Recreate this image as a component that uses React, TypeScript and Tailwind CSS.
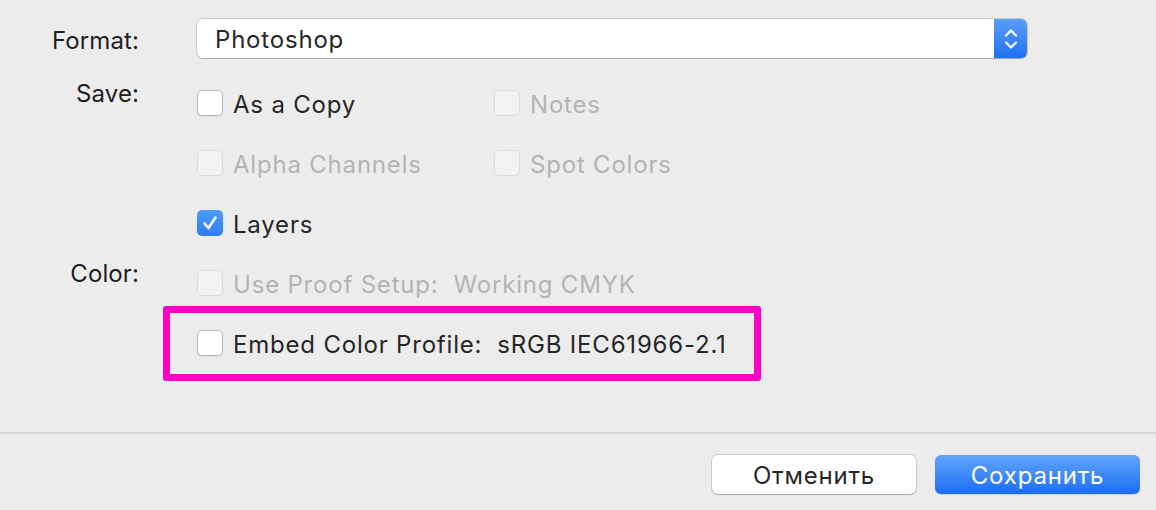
import {ReactNode} from "react";

const font = {fontFamily: "Inter, 'Liberation Sans', sans-serif"};

function Box({checked, disabled}: {checked?: boolean; disabled?: boolean}) {
    if (checked) {
        return (
            <span className="w-[26px] h-[26px] rounded-[5px] bg-gradient-to-b from-[#4d9cf8] to-[#2f7cf3] flex items-center justify-center shrink-0">
                <svg width="18" height="18" viewBox="0 0 18 18">
                    <path d="M3.5 9.5 L7.5 14 L14.5 3.5" stroke="white" strokeWidth="2.6" fill="none" strokeLinecap="round" strokeLinejoin="round"/>
                </svg>
            </span>
        );
    }
    return (
        <span
            className={
                disabled
                    ? "w-[26px] h-[26px] rounded-[5px] border border-[#dadada] bg-[#f2f2f2] shrink-0"
                    : "w-[26px] h-[26px] rounded-[5px] border border-[#b9b9b9] bg-white shadow-[0_1px_1px_rgba(0,0,0,0.08)] shrink-0"
            }
        />
    );
}

function Check({label, checked, disabled, w}: {label: ReactNode; checked?: boolean; disabled?: boolean; w?: string}) {
    return (
        <div className={"flex items-center gap-[10px] " + (w ?? "")}>
            <Box checked={checked} disabled={disabled}/>
            <span className={disabled ? "text-[#b4b4b4] pt-[3px]" : "text-[#262626] pt-[3px]"}>{label}</span>
        </div>
    );
}

function Label({children}: {children: ReactNode}) {
    return <div className="text-right text-[#1e1e1e] self-start pt-[7px] leading-[28px] tracking-[0.1px]">{children}</div>;
}

export default function App() {
    return (
        <div className="w-[1156px] h-[510px] bg-[#ececec] flex flex-col text-[24px] tracking-[0.8px]" style={font}>
            <div className="grid grid-cols-[139px_1fr] gap-x-[58px] pt-[19px]">
                {/* format */}
                <div className="text-right text-[#1e1e1e] h-[39px] flex items-center justify-end pt-[4px] tracking-[0.1px]">Format:</div>
                <div className="w-[830px] h-[39px] flex rounded-[6px] shadow-[0_0_0_1px_rgba(0,0,0,0.14),0_1px_1px_rgba(0,0,0,0.18)] overflow-hidden">
                    <div className="flex-1 bg-white flex items-center pl-[18px] pt-[3px] text-[#262626]">Photoshop</div>
                    <div className="w-[33px] bg-gradient-to-b from-[#5a9ef9] to-[#1e6ff4] flex items-center justify-center">
                        <svg width="16" height="26" viewBox="0 0 16 26">
                            <path d="M3 9.5 L8 4.5 L13 9.5 M3 16.5 L8 21.5 L13 16.5" stroke="white" strokeWidth="2.2" fill="none" strokeLinecap="round" strokeLinejoin="round"/>
                        </svg>
                    </div>
                </div>

                <div className="h-[15px] col-span-2"/>

                {/* save */}
                <Label>Save:</Label>
                <div className="flex flex-col">
                    <div className="h-[60px] flex items-center">
                        <Check label="As a Copy" w="w-[297px]"/>
                        <Check label="Notes" disabled/>
                    </div>
                    <div className="h-[60px] flex items-center">
                        <Check label="Alpha Channels" disabled w="w-[297px]"/>
                        <Check label="Spot Colors" disabled/>
                    </div>
                    <div className="h-[60px] flex items-center">
                        <Check label="Layers" checked/>
                    </div>
                </div>

                {/* color */}
                <Label>Color:</Label>
                <div className="flex flex-col">
                    <div className="h-[60px] flex items-center">
                        <Check label={<>Use Proof Setup:&nbsp; Working CMYK</>} disabled/>
                    </div>
                    <div className="h-[60px] flex items-center">
                        <div className="-ml-[34px] w-[598px] h-[75px] border-[7px] border-[#ff00c6] rounded-[3px] flex items-center pl-[27px]">
                            <Check label={<>Embed Color Profile:&nbsp; sRGB IEC61966-2.1</>}/>
                        </div>
                    </div>
                </div>
            </div>

            <div className="mt-auto h-[2px] bg-[#d6d6d6] mb-[21px]"/>

            <div className="flex justify-end gap-[19px] pr-[16px] pb-[16px]">
                <button className="w-[204px] h-[39px] pt-[3px] rounded-[6px] bg-white text-[#262626] shadow-[0_0_0_1px_rgba(0,0,0,0.13),0_1px_1px_rgba(0,0,0,0.2)]">Отменить</button>
                <button className="w-[205px] h-[39px] pt-[3px] rounded-[6px] bg-gradient-to-b from-[#62a5fa] to-[#1a6cf4] text-white shadow-[0_1px_1px_rgba(0,0,0,0.15)]">Сохранить</button>
            </div>
        </div>
    );
}
